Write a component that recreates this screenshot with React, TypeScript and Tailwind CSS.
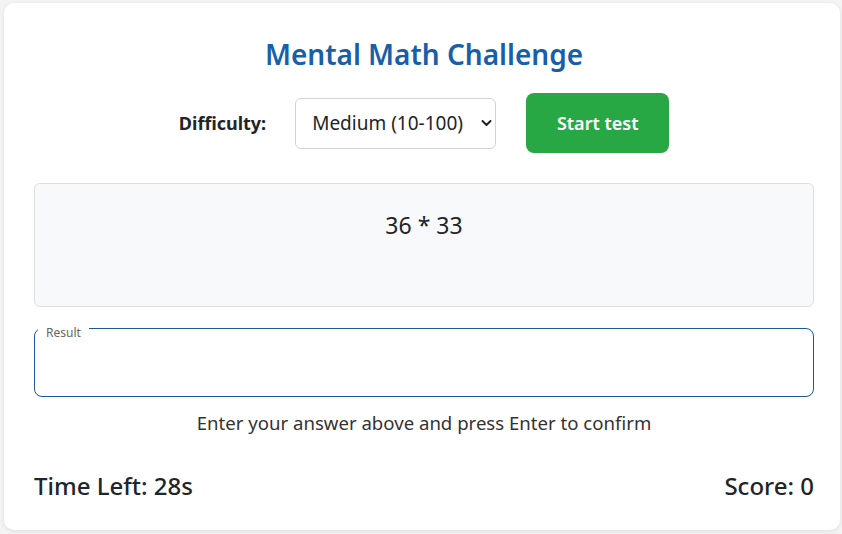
import { useState } from "react"

const font = { fontFamily: '"Noto Sans", "Open Sans", Arial, sans-serif' }

function Chevron() {
  return (
    <svg width="11" height="7" viewBox="0 0 11 7" className="pointer-events-none absolute right-[4px] top-1/2 -translate-y-1/2">
      <path d="M1.5 1.5 L5.5 5.5 L9.5 1.5" fill="none" stroke="#222" strokeWidth="2" strokeLinecap="round" strokeLinejoin="round" />
    </svg>
  )
}

export default function App() {
  const [difficulty, setDifficulty] = useState("medium")
  const [answer, setAnswer] = useState("")

  return (
    <div className="min-h-screen bg-[#f4f4f4] pl-[4px] pt-[3px]" style={font}>
      <div className="w-[836px] rounded-[10px] bg-white pl-[30px] pr-[26px] pt-[34px] pb-[28px] shadow-[0_1px_5px_rgba(0,0,0,0.09)]">
        <h1 className="text-center text-[28px] font-semibold leading-[34px] text-[#1760a9]">Mental Math Challenge</h1>

        <div className="mt-[22px] flex h-[60px] items-center justify-center">
          <label htmlFor="difficulty" className="text-[18px] font-bold text-[#212529]">
            Difficulty:
          </label>
          <div className="relative ml-[29px]">
            <select
              id="difficulty"
              value={difficulty}
              onChange={(e) => setDifficulty(e.target.value)}
              className="h-[51px] w-[201px] appearance-none rounded-[6px] border border-[#cfd2d6] bg-white pl-[16px] pr-[24px] text-[19px] text-[#212529] outline-none"
            >
              <option value="easy">Easy (1-10)</option>
              <option value="medium">Medium (10-100)</option>
              <option value="hard">Hard (100-1000)</option>
            </select>
            <Chevron />
          </div>
          <button className="ml-[30px] h-[60px] w-[143px] rounded-[8px] bg-[#28a745] text-[18px] font-semibold text-white">
            Start test
          </button>
        </div>

        <div className="mt-[30px] h-[124px] rounded-[6px] border border-[#dcdfe3] bg-[#f8f9fb] pt-[24px] text-center text-[23px] leading-[34px] text-[#212529]">
          36 * 33
        </div>

        <div className="relative mt-[21px] h-[69px] rounded-[8px] border border-[#1d5a94]">
          <span className="absolute -top-[3px] left-[3px] bg-white px-[8px] text-[12px] leading-[14px] text-[#666]">Result</span>
          <input
            value={answer}
            onChange={(e) => setAnswer(e.target.value)}
            className="h-full w-full rounded-[8px] bg-transparent px-[14px] pt-[8px] text-[18px] outline-none"
          />
        </div>

        <p className="mt-[12px] text-center text-[18.6px] leading-[27px] text-[#333]">
          Enter your answer above and press Enter to confirm
        </p>

        <div className="mt-[34px] flex items-center justify-between text-[24px] font-medium leading-[32px] text-[#212529]">
          <span>Time Left: 28s</span>
          <span>Score: 0</span>
        </div>
      </div>
    </div>
  )
}
